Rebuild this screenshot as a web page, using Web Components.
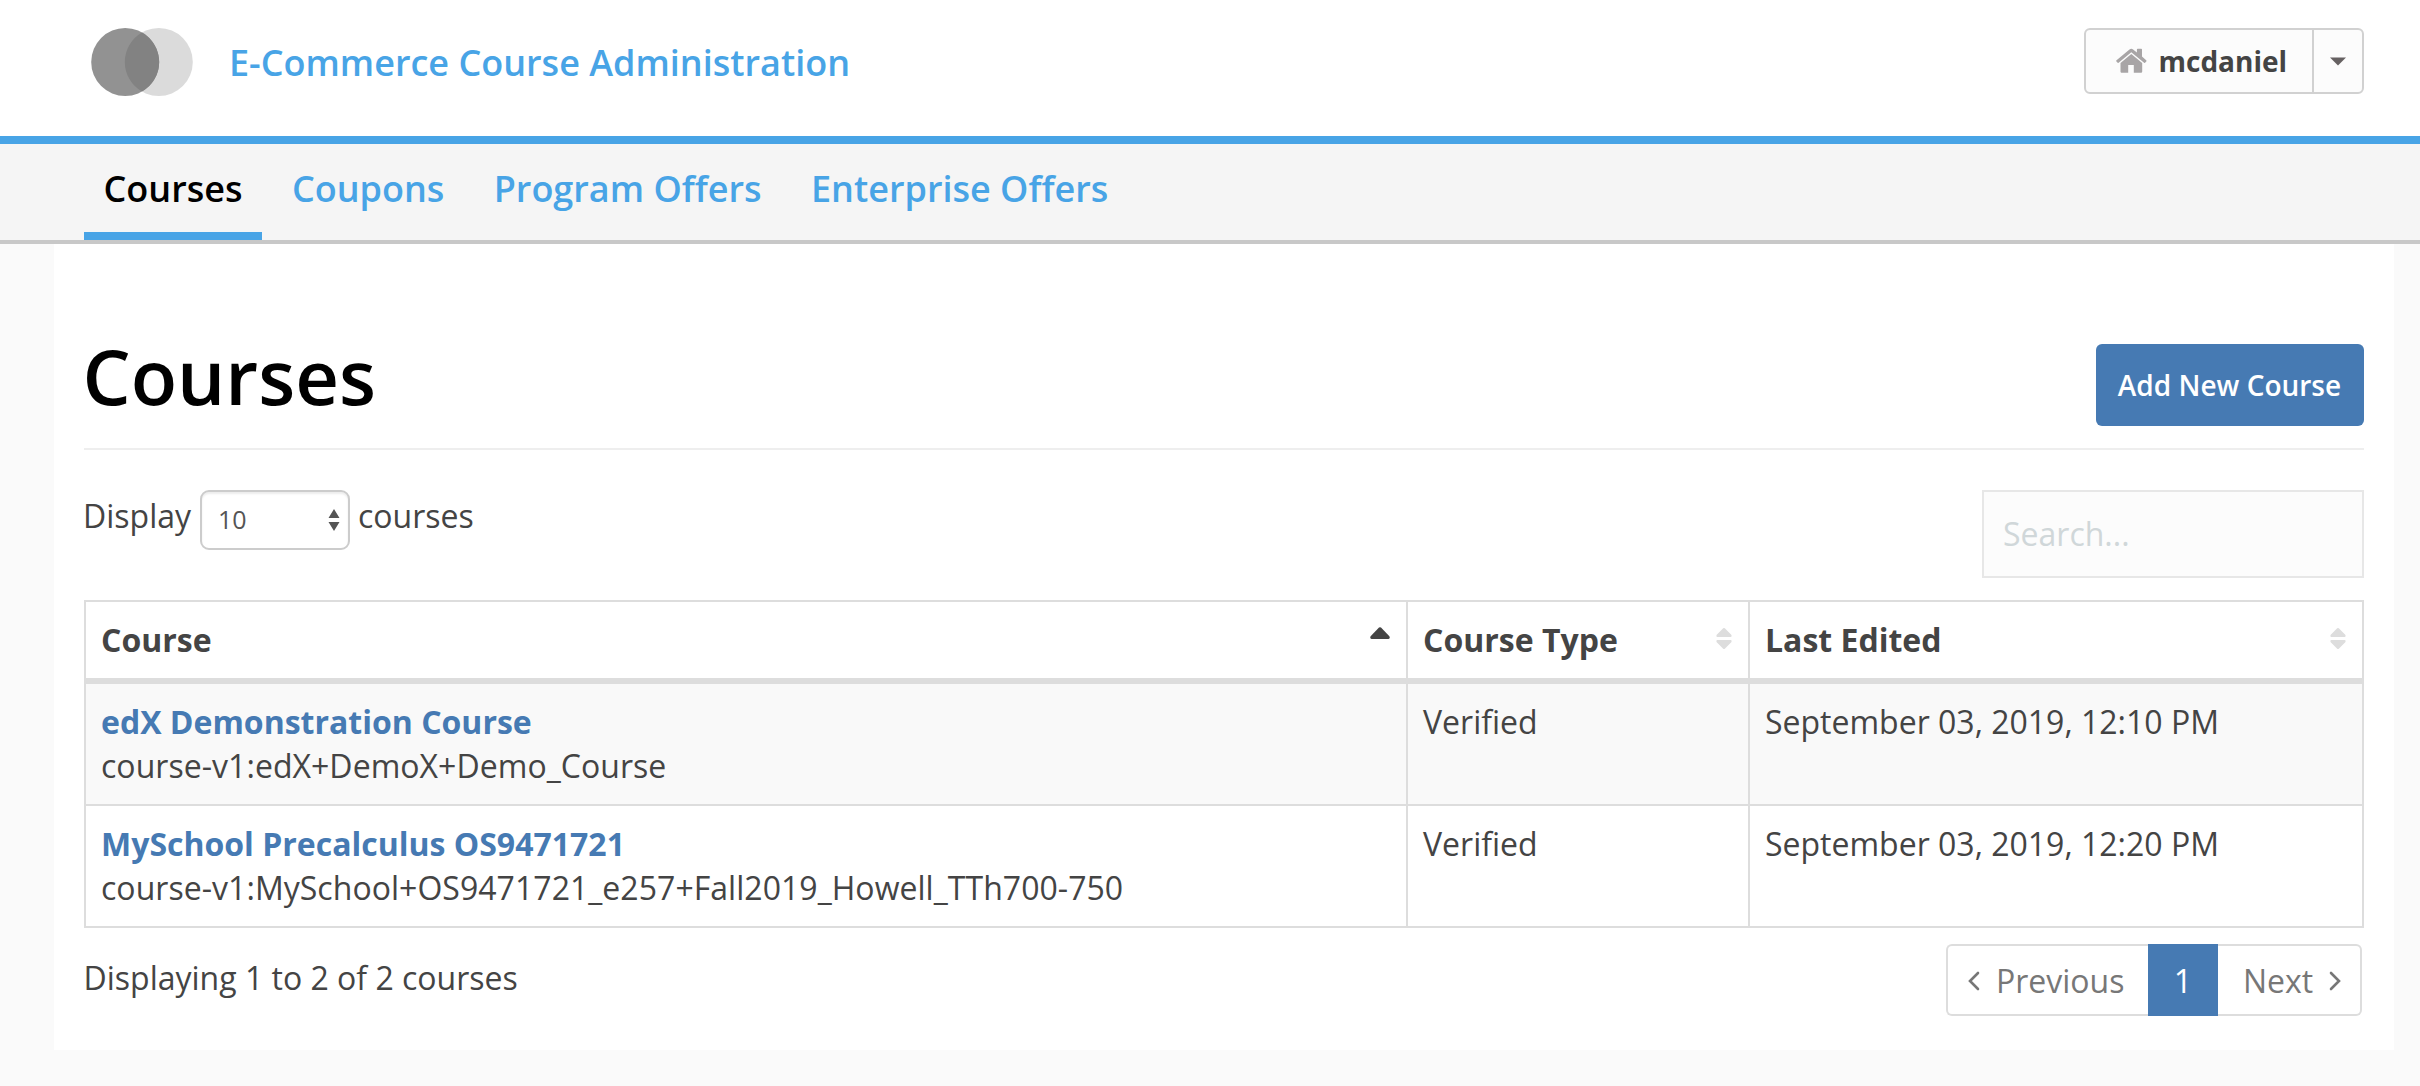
<!DOCTYPE html>
<html lang="en">
<head>
<meta charset="utf-8">
<title>E-Commerce Course Administration</title>
<style>
html,body{margin:0;padding:0}
body{background:#fafafa;color:#444;font-family:"Open Sans",sans-serif;font-size:32px;line-height:44px;min-height:1086px;overflow:hidden;
--blue:#48a4e6;--primary:#467ab3;--line:#ddd}
</style>
</head>
<body>
<site-header heading="E-Commerce Course Administration"><user-menu>mcdaniel</user-menu></site-header>
<nav-bar>
<nav-item active>Courses</nav-item><nav-item>Coupons</nav-item><nav-item>Program Offers</nav-item><nav-item>Enterprise Offers</nav-item>
</nav-bar>
<page-panel>
<page-title label="Courses"><action-button>Add New Course</action-button></page-title>
<table-tools></table-tools>
<data-table>
<header-row><header-cell sort="asc">Course</header-cell><header-cell sort="both">Course Type</header-cell><header-cell sort="both">Last Edited</header-cell></header-row>
<course-row name="edX Demonstration Course" key="course-v1:edX+DemoX+Demo_Course" type="Verified" edited="September 03, 2019, 12:10 PM" striped></course-row>
<course-row name="MySchool Precalculus OS9471721" key="course-v1:MySchool+OS9471721_e257+Fall2019_Howell_TTh700-750" type="Verified" edited="September 03, 2019, 12:20 PM"></course-row>
</data-table>
<table-footer>Displaying 1 to 2 of 2 courses<page-links slot="pages"></page-links></table-footer>
</page-panel>
<script>
const define = (name, render) => customElements.define(name, class extends HTMLElement {
  constructor() {
    super();
    this.attachShadow({mode: 'open'});
  }
  connectedCallback() {
    this.shadowRoot.innerHTML = '<style>*{box-sizing:border-box}:host{box-sizing:border-box}</style>' + render(this);
  }
});
const attr = (el, n) => el.getAttribute(n) || '';

define('site-header', el => `<style>
:host{display:flex;align-items:center;height:144px;background:#fff;border-bottom:8px solid var(--blue);padding:0 56px 12px 91px}
svg{display:block;flex:none}
a{margin-left:35px;margin-top:2px;flex:1;font-size:36px;font-weight:600;color:var(--blue);white-space:nowrap}
</style>
<svg width="103" height="70" viewBox="0 0 103 70"><circle cx="67.800" cy="35" r="34" fill="#dbdbdb"/><circle cx="34.2" cy="35" r="34" fill="#929292"/><path d="M51 5.450a34 34 0 0 1 0 59.100a34 34 0 0 1 0-59.100z" fill="#828282"/></svg>
<a>${attr(el,'heading')}</a><slot></slot>`);

define('user-menu', () => `<style>
:host{display:flex;width:280px;height:66px;margin-top:-2px;border:2px solid #d1d1d1;border-radius:6px;background:#fcfcfc;font-size:28px;font-weight:700;line-height:62px}
.name{display:flex;align-items:center;width:228px;padding-left:30px;border-right:2px solid #d1d1d1}
.home{margin-right:12px;margin-top:-1px;margin-left:-.5px;flex:none}
.drop{flex:1;display:flex;align-items:center;justify-content:center;padding-top:1px}
svg{display:block}
</style>
<div class="name"><svg class="home" width="31" height="26" viewBox="0 0 31 26" fill="#a8a5a6"><path d="M15.3 6L4.5 15v8.4c0 .8.6 1.4 1.4 1.4h6.3V17h5.6v7.8h7c.8 0 1.4-.6 1.4-1.4V15z"/><path d="M30.2 12.2L26 8.6V1.6c0-.5-.3-.8-.8-.8h-3.5c-.5 0-.8.3-.8.8v3L17.1 1.4a2.8 2.8 0 0 0-3.6 0L.5 12.2c-.4.3-.4.8-.1 1.2l1 1.2c.3.4.8.4 1.2.1L15.3 4.2l12.8 10.5c.4.3.9.3 1.2-.1l1-1.2c.3-.4.3-.9-.1-1.2z"/></svg><slot></slot></div>
<div class="drop"><svg width="16" height="9" viewBox="0 0 16 9"><path d="M0 .5h16L8 8.5z" fill="#666162"/></svg></div>`);

define('nav-bar', () => `<style>
:host{display:flex;gap:10.400px;height:100px;padding-left:84px;background:#f5f5f5;border-bottom:4px solid #c8c8c8}
</style><slot></slot>`);

define('nav-item', () => `<style>
:host{display:block;height:96px;padding:0 19.500px;border-bottom:8px solid transparent;font-size:36px;font-weight:600;line-height:90px;color:var(--blue);white-space:nowrap}
:host([active]){color:#000;border-color:var(--blue)}
</style><slot></slot>`);

define('page-panel', () => `<style>
:host{display:flex;flex-direction:column;width:2340px;height:806px;margin-left:54px;padding:100px 30px 0;background:#fff}
</style><slot></slot>`);

define('page-title', el => `<style>
:host{display:flex;justify-content:space-between;align-items:flex-start;height:106px;border-bottom:2px solid #eee}
h1{margin:0 0 0 -1.500px;font-size:76px;font-weight:600;line-height:64px;color:#000}
</style><h1>${attr(el,'label')}</h1><slot></slot>`);

define('action-button', () => `<style>
:host{display:block;width:268px;height:82px;padding-right:1px;border-radius:6px;background:var(--primary);color:#fff;font-size:28px;font-weight:600;line-height:83px;text-align:center;white-space:nowrap}
</style><slot></slot>`);

define('table-tools', () => `<style>
:host{display:flex;justify-content:space-between;align-items:flex-start;height:150px;padding-top:40px}
.length{display:flex;align-items:flex-start;gap:8px;line-height:52px}
.length>:first-child{margin:0 1px 0 -1px}
.select{display:flex;align-items:center;justify-content:space-between;width:150px;height:60px;padding:0 8px 0 16px;border:2px solid #ccc;border-radius:9px;box-shadow:inset 0 2px 2px rgba(0,0,0,.075);background:#fff;color:#555;font-size:25px;line-height:54px}
.select span{padding-bottom:2px}
svg{display:block}
.search{width:382px;height:88px;padding:0 19px;border:2px solid #e7e7e7;background:#fcfcfc;color:#d0d7d9;line-height:84px}
</style>
<div class="length"><span>Display</span><div class="select"><span>10</span><svg width="12" height="22" viewBox="0 0 12 22"><path d="M.5 9L6 0l5.500 9zM.5 13h11L6 22z" fill="#555"/></svg></div><span>courses</span></div>
<div class="search">Search...</div>`);

define('data-table', () => `<style>
:host{display:block;height:328px;border:2px solid var(--line)}
</style><slot></slot>`);

define('header-row', () => `<style>
:host{display:grid;grid-template-columns:1322px 342px 1fr;height:82px;border-bottom:6px solid var(--line);font-weight:700}
::slotted(:not(:last-child)){border-right:2px solid var(--line)}
</style><slot></slot>`);

define('header-cell', el => `<style>
:host{display:flex;justify-content:space-between;box-sizing:border-box;height:76px;padding:0 16px 0 15px;line-height:76px;white-space:nowrap}
svg{display:block;margin-top:25px}
</style><slot></slot>${attr(el,'sort') === 'asc'
? '<svg width="20" height="24" viewBox="0 0 20 24"><path d="M9 .6Q10 -.3 11 .6L19.400 9.300Q20.400 12 18.500 12H1.500Q-.4 12 .6 9.300z" fill="#444"/></svg>'
: '<svg width="16" height="24" viewBox="0 0 16 24"><path d="M7.200 1.300Q8 .6 8.800 1.300L15.500 8Q16 10 14.800 10H1.200Q0 10 .5 8zM7.200 21.700Q8 22.400 8.800 21.700L15.500 15Q16 13 14.800 13H1.200Q0 13 .5 15z" fill="#ddd"/></svg>'}`);

define('course-row', el => `<style>
:host{display:grid;grid-template-columns:1322px 342px 1fr;height:120px;white-space:nowrap}
:host([striped]){height:122px;background:#f9f9f9;border-bottom:2px solid var(--line)}
div{padding:16px 16px 16px 15px}
div:not(:last-child){border-right:2px solid var(--line)}
a,span{display:block}
a{font-weight:700;color:var(--primary)}
span{letter-spacing:.04px}
</style><div><a>${attr(el,'name')}</a><span>${attr(el,'key')}</span></div><div>${attr(el,'type')}</div><div>${attr(el,'edited')}</div>`);

define('table-footer', () => `<style>
:host{display:flex;justify-content:space-between;padding:16px 2px 0 0;line-height:68px}
span{margin-left:-.5px}
</style><span><slot></slot></span><slot name="pages"></slot>`);

define('page-links', () => `<style>
:host{display:flex;width:416px;height:72px;color:#777}
div{display:flex;align-items:center;height:72px;border:2px solid var(--line);line-height:67px}
.prev{width:202px;border-right:0;border-radius:6px 0 0 6px;padding-left:19px;gap:16px}
.num{width:70px;justify-content:center;border-color:var(--primary);background:var(--primary);color:#fff}
.next{flex:1;border-left:0;border-radius:0 6px 6px 0;padding-left:25px;gap:15.500px}
svg{display:block;fill:none;stroke:#777;stroke-width:2.600;stroke-linecap:round;margin-top:2px}
</style>
<div class="prev"><svg width="13" height="20" viewBox="0 0 13 20"><path d="M11 2L3 10l8 8"/></svg><span>Previous</span></div>
<div class="num">1</div>
<div class="next"><span>Next</span><svg width="13" height="20" viewBox="0 0 13 20"><path d="M2 2l8 8-8 8"/></svg></div>`);
</script>
</body>
</html>
